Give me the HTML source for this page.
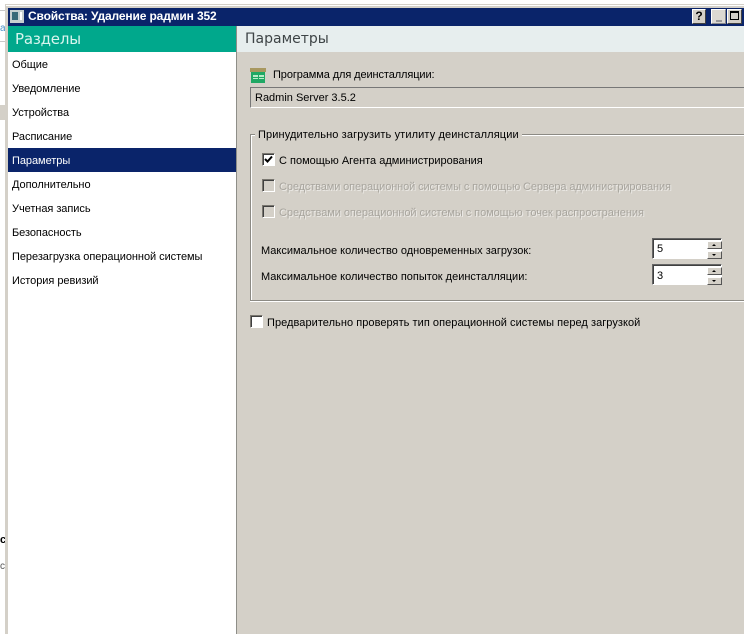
<!DOCTYPE html>
<html><head><meta charset="utf-8"><style>
html,body{margin:0;padding:0;background:#fff}
body{width:744px;height:634px;position:relative;overflow:hidden;font:11px "Liberation Sans",sans-serif;color:#000}
div,span{position:absolute;white-space:nowrap}
.item{left:12px;line-height:14px;height:14px;letter-spacing:-.05px}
.t{line-height:14px;height:14px}
.dis{color:#a8a59e;text-shadow:1px 1px 0 rgba(255,255,255,.55);letter-spacing:-.12px}
.cb{width:11px;height:11px;background:#fff;border:1px solid;border-color:#7a7770 #fff #fff #7a7770;box-shadow:inset 1px 1px 0 #404040}
.cb.d{background:#d4d0c8}
.spin{width:68px;height:19px;background:#fff;border:1px solid;border-color:#666 #fff #fff #666;box-shadow:inset 1px 1px 0 #404040}
.btn{width:15px;height:8px;left:707px;background:#d4d0c8;border:1px solid;border-color:#fff #555 #555 #fff;box-sizing:border-box}
.up,.dn{left:4px;width:0;height:0;border-left:2px solid transparent;border-right:2px solid transparent}
.up{top:2px;border-bottom:2px solid #000}
.dn{top:2px;border-top:2px solid #000}
.wb{top:9px;height:15px;background:#d4d0c8;border:1px solid;border-color:#fff #404040 #404040 #fff;box-sizing:border-box}
</style></head><body>
<div style="left:0;top:10px;width:5px;height:1px;background:#c8c8c8"></div>
<div style="left:0;top:24px;width:5px;height:9px;color:#4a90c8;font-size:10px;line-height:9px">a</div>
<div style="left:0;top:41px;width:5px;height:1px;background:#c8c8c8"></div>
<div style="left:0;top:105px;width:5px;height:15px;background:#d4d0c8"></div>
<div style="left:0;top:534px;font:bold 11px 'Liberation Sans',sans-serif;line-height:12px">c</div>
<div style="left:0;top:561px;font-size:10px;line-height:12px;color:#555">c</div>

<div style="left:5px;top:4px;width:739px;height:630px;background:#d4d0c8"></div>
<div style="left:6px;top:5px;width:738px;height:1px;background:#fff"></div>
<div style="left:8px;top:8px;width:736px;height:18px;background:#0a246a"></div>
<div style="left:10px;top:10px;width:14px;height:13px;background:#c8d0d0"></div>
<div style="left:12px;top:12px;width:6px;height:8px;background:#3a6a78"></div>
<div style="left:20px;top:12px;width:2px;height:8px;background:#fff"></div>
<div style="left:28px;top:9px;color:#fff;font:bold 12px/15px 'Liberation Sans',sans-serif;letter-spacing:-.14px" id="title">Свойства: Удаление радмин 352</div>
<div class="wb" style="left:692px;width:14px;font:bold 12px/13px 'Liberation Sans',sans-serif;text-align:center">?</div>
<div class="wb" style="left:711px;width:15px;background:#dcd9d2;border-color:#fff #888 #888 #fff"><span style="left:4px;top:10px;width:6px;height:2px;background:#999"></span></div>
<div class="wb" style="left:727px;width:15px"><span style="left:2px;top:1px;width:7px;height:6px;border:1px solid #000;border-top-width:2px"></span></div>

<div style="left:8px;top:26px;width:228px;height:26px;background:#00a88c"></div>
<div style="left:15px;top:29px;color:#d8f5ee;font:15px/20px 'DejaVu Sans',sans-serif;letter-spacing:-.2px">Разделы</div>
<div style="left:8px;top:52px;width:228px;height:582px;background:#fff"></div>
<div style="left:236px;top:26px;width:1px;height:608px;background:#8e8e88"></div>
<div style="left:237px;top:26px;width:507px;height:26px;background:#e7eeee"></div>
<div style="left:245px;top:29px;color:#3e4446;font:14px/20px 'DejaVu Sans',sans-serif">Параметры</div>

<div class="item" style="top:58px">Общие</div>
<div class="item" style="top:82px">Уведомление</div>
<div class="item" style="top:106px">Устройства</div>
<div class="item" style="top:130px">Расписание</div>
<div style="left:8px;top:148px;width:228px;height:24px;background:#0a246a"></div>
<div class="item" style="top:154px;color:#fff">Параметры</div>
<div class="item" style="top:178px">Дополнительно</div>
<div class="item" style="top:202px">Учетная запись</div>
<div class="item" style="top:226px">Безопасность</div>
<div class="item" style="top:250px">Перезагрузка операционной системы</div>
<div class="item" style="top:274px">История ревизий</div>

<svg style="position:absolute;left:250px;top:68px" width="16" height="16" viewBox="0 0 16 16"><path d="M0 0h16v4H0z" fill="#a89860"/><path d="M1 4h14v11H1z" fill="#1fa864"/><path d="M3 7h11v4H3z" fill="#b8ecc8"/><path d="M3 9h11v1H3zM8 7h1v4H8z" fill="#1fa864"/></svg>
<div class="t" style="left:273px;top:68px;letter-spacing:-.1px">Программа для деинсталляции:</div>
<div style="left:250px;top:87px;width:494px;height:19px;border:1px solid;border-color:#777 #fff #fff #777;border-right:0"></div>
<div class="t" style="left:255px;top:91px">Radmin Server 3.5.2</div>

<div style="left:250px;top:134px;width:494px;height:165px;border:1px solid #8c8a84;border-right:0;box-shadow:inset 1px 1px 0 #fff,0 1px 0 #fff"></div>
<div class="t" style="left:255px;top:128px;background:#d4d0c8;padding:0 3px;letter-spacing:.12px">Принудительно загрузить утилиту деинсталляции</div>

<div class="cb" style="left:262px;top:153px"></div>
<svg style="position:absolute;left:262px;top:153px" width="13" height="13" viewBox="0 0 13 13"><path d="M3 6l2.5 2.5L10 3.5" fill="none" stroke="#000" stroke-width="2"/></svg>
<div class="t" style="left:279px;top:154px">С помощью Агента администрирования</div>
<div class="cb d" style="left:262px;top:179px"></div>
<div class="t dis" style="left:279px;top:180px">Средствами операционной системы с помощью Сервера администрирования</div>
<div class="cb d" style="left:262px;top:205px"></div>
<div class="t dis" style="left:279px;top:206px;letter-spacing:-.06px">Средствами операционной системы с помощью точек распространения</div>

<div class="t" style="left:261px;top:244px">Максимальное количество одновременных загрузок:</div>
<div class="t" style="left:261px;top:270px">Максимальное количество попыток деинсталляции:</div>

<div class="spin" style="left:652px;top:238px"></div>
<div class="t" style="left:657px;top:242px">5</div>
<div class="btn" style="top:241px"><span class="up"></span></div>
<div class="btn" style="top:251px"><span class="dn"></span></div>
<div class="spin" style="left:652px;top:264px"></div>
<div class="t" style="left:657px;top:269px">3</div>
<div class="btn" style="top:267px"><span class="up"></span></div>
<div class="btn" style="top:277px"><span class="dn"></span></div>

<div class="cb" style="left:250px;top:315px"></div>
<div class="t" style="left:267px;top:316px;letter-spacing:.05px">Предварительно проверять тип операционной системы перед загрузкой</div>
</body></html>
